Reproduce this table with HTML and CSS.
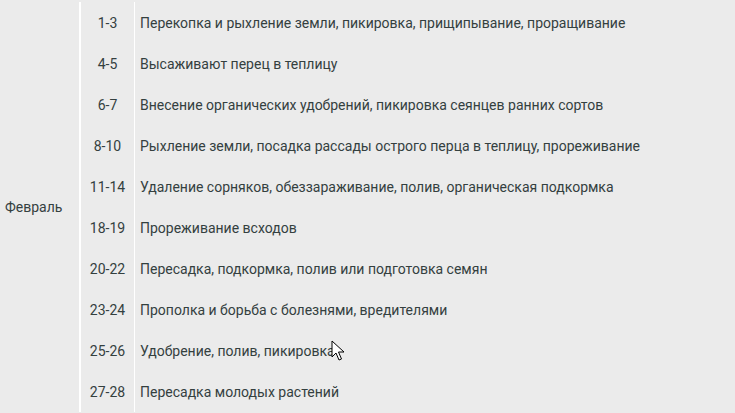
FILE: index.html
```html
<!DOCTYPE html>
<html lang="ru">
<head>
<meta charset="utf-8">
<link rel="stylesheet" href="styles.css">
</head>
<body>
<table class="plan">
  <tbody>
    <tr>
      <td class="month" rowspan="10">Февраль</td>
      <td class="date">1-3</td>
      <td class="task">Перекопка и рыхление земли, пикировка, прищипывание, проращивание</td>
    </tr>
    <tr><td class="date">4-5</td><td class="task">Высаживают перец в теплицу</td></tr>
    <tr><td class="date">6-7</td><td class="task">Внесение органических удобрений, пикировка сеянцев ранних сортов</td></tr>
    <tr><td class="date">8-10</td><td class="task">Рыхление земли, посадка рассады острого перца в теплицу, прореживание</td></tr>
    <tr><td class="date">11-14</td><td class="task">Удаление сорняков, обеззараживание, полив, органическая подкормка</td></tr>
    <tr><td class="date">18-19</td><td class="task">Прореживание всходов</td></tr>
    <tr><td class="date">20-22</td><td class="task">Пересадка, подкормка, полив или подготовка семян</td></tr>
    <tr><td class="date">23-24</td><td class="task">Прополка и борьба с болезнями, вредителями</td></tr>
    <tr><td class="date">25-26</td><td class="task">Удобрение, полив, пикировка</td></tr>
    <tr><td class="date">27-28</td><td class="task">Пересадка молодых растений</td></tr>
  </tbody>
</table>
<svg class="cursor" width="14" height="22" viewBox="0 0 14 22" aria-hidden="true">
  <path d="M1 1 L1 17 L5 13 L8 20 L10.5 19 L7.5 12 L13 12 Z" fill="#ffffff" stroke="#000000" stroke-width="1" stroke-linejoin="miter"/>
</svg>
</body>
</html>
```
FILE: styles.css
```css
html, body {
  margin: 0;
  padding: 0;
  background: #ebebeb;
  overflow: hidden;
}
body {
  padding-top: 2px;
  font-family: Roboto, "Liberation Sans", sans-serif;
  font-size: 14px;
  color: #34403f;
}
.plan {
  border-collapse: collapse;
  width: 760px;
}
.plan td {
  height: 41px;
  padding: 0;
  vertical-align: middle;
  white-space: nowrap;
}
.month {
  width: 74px;
  padding-left: 5px !important;
  border-right: 2px solid #ffffff;
}
.date {
  width: 53px;
  text-align: center;
  border-right: 1px solid #ffffff;
}
.task {
  padding-left: 5px !important;
}
.cursor {
  position: absolute;
  left: 331px;
  top: 340px;
}
```
